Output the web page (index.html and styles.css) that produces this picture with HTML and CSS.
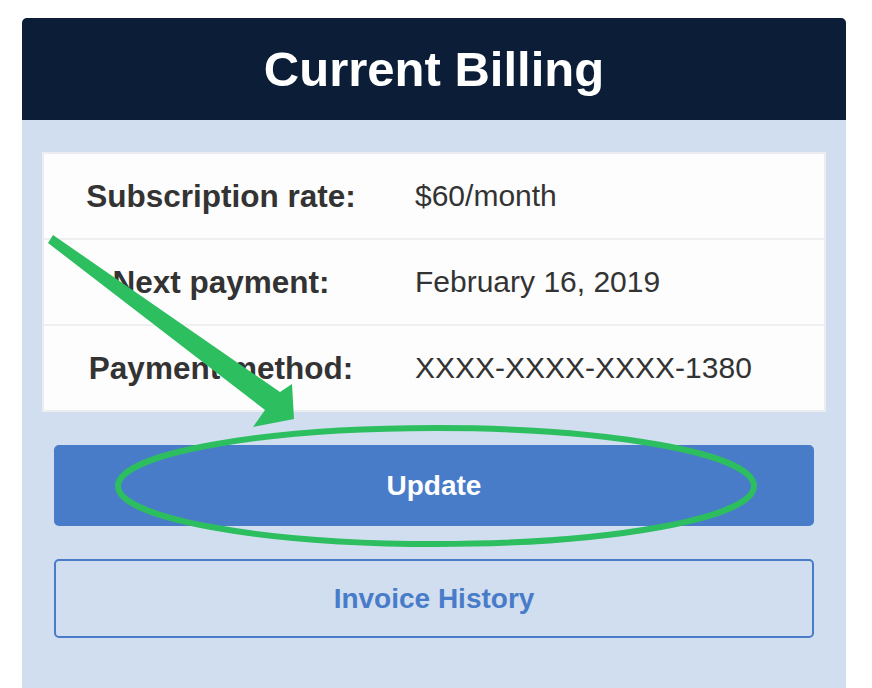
FILE: index.html
```html
<!DOCTYPE html>
<html lang="en">
<head>
<meta charset="utf-8">
<title>Current Billing</title>
<link rel="stylesheet" href="styles.css">
</head>
<body>
<div class="page">
  <section class="card">
    <header class="card-header">
      <h1 class="card-title">Current Billing</h1>
    </header>
    <div class="card-body">
      <div class="billing-table">
        <div class="billing-row">
          <div class="billing-label">Subscription rate:</div>
          <div class="billing-value">$60/month</div>
        </div>
        <div class="billing-row">
          <div class="billing-label">Next payment:</div>
          <div class="billing-value">February 16, 2019</div>
        </div>
        <div class="billing-row">
          <div class="billing-label">Payment method:</div>
          <div class="billing-value">XXXX-XXXX-XXXX-1380</div>
        </div>
      </div>
      <div class="actions">
        <button class="btn btn-primary" type="button">Update</button>
        <button class="btn btn-outline" type="button">Invoice History</button>
      </div>
    </div>
  </section>
</div>
<svg class="annotation" width="872" height="688" viewBox="0 0 872 688" aria-hidden="true">
  <ellipse cx="436" cy="486" rx="318" ry="58" fill="none" stroke="#2dbe60" stroke-width="6"/>
  <polygon points="53,235 280,392 292,384 294,419 253,427 265,410 48,243" fill="#2dbe60"/>
</svg>
</body>
</html>
```

FILE: styles.css
```css
* {
  box-sizing: border-box;
}

html, body {
  margin: 0;
  padding: 0;
  background: #ffffff;
}

body {
  font-family: "Liberation Sans", Arial, Helvetica, sans-serif;
  color: #333333;
  width: 872px;
  height: 688px;
  overflow: hidden;
  position: relative;
}

.page {
  padding: 18px 26px 0 22px;
}

.card {
  background: #d1deef;
  border-radius: 5px 5px 0 0;
  min-height: 680px;
  overflow: hidden;
}

.card-header {
  background: #0b1d37;
  height: 102px;
  display: flex;
  align-items: center;
  justify-content: center;
}

.card-title {
  margin: 0;
  color: #ffffff;
  font-size: 49px;
  font-weight: 700;
  letter-spacing: 0;
  line-height: 1;
  padding-top: 0;
}

.card-body {
  padding: 32px 20px 40px;
}

.billing-table {
  background: #fdfdfd;
  border: 2px solid #ebedf0;
}

.billing-row {
  display: grid;
  grid-template-columns: 354px 1fr;
  align-items: center;
  height: 86px;
  border-top: 2px solid #eeeff1;
}

.billing-row:first-child {
  border-top: none;
  height: 84px;
}

.billing-label {
  text-align: center;
  font-weight: 700;
  font-size: 31.5px;
  color: #333333;
}

.billing-value {
  padding-left: 17px;
  font-size: 30px;
  color: #333333;
}

.actions {
  margin-top: 33px;
  padding: 0 12px;
  display: flex;
  flex-direction: column;
  gap: 33px;
}

.btn {
  display: flex;
  align-items: center;
  justify-content: center;
  width: 100%;
  height: 80px;
  border-radius: 5px;
  font-family: "Liberation Sans", Arial, Helvetica, sans-serif;
  font-size: 28px;
  font-weight: 700;
  cursor: pointer;
}

.btn-primary {
  background: #487cc9;
  border: 2px solid #487cc9;
  color: #ffffff;
  height: 81px;
}

.btn-outline {
  background: transparent;
  border: 2px solid #487cc9;
  color: #487cc9;
  height: 79px;
}

.annotation {
  position: absolute;
  left: 0;
  top: 0;
  pointer-events: none;
}
```
